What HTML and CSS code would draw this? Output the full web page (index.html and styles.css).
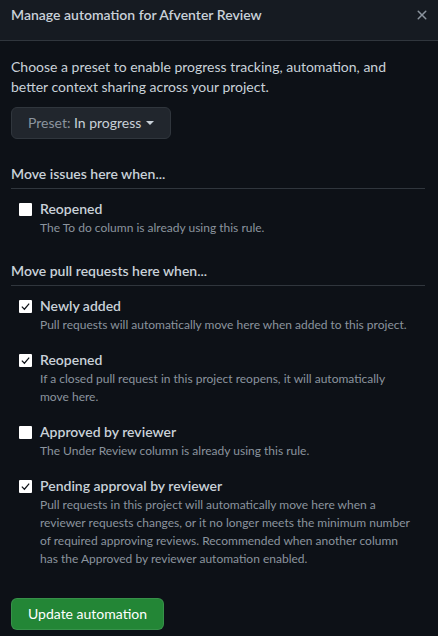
FILE: index.html
```html
<!DOCTYPE html>
<html lang="en">
<head>
<meta charset="utf-8">
<title>Manage automation</title>
<link rel="stylesheet" href="styles.css">
</head>
<body>
<div class="dialog">
  <div class="header">
    <h1 class="title">Manage automation for Afventer Review</h1>
    <button class="close" aria-label="Close">
      <svg width="16" height="16" viewBox="0 0 16 16"><path fill="currentColor" d="M3.72 3.72a.75.75 0 0 1 1.06 0L8 6.94l3.22-3.22a.75.75 0 1 1 1.06 1.06L9.06 8l3.22 3.22a.75.75 0 1 1-1.06 1.06L8 9.06l-3.22 3.22a.75.75 0 0 1-1.06-1.06L6.94 8 3.72 4.78a.75.75 0 0 1 0-1.06Z"/></svg>
    </button>
  </div>
  <div class="body">
    <p class="intro">Choose a preset to enable progress tracking, automation, and better context sharing across your project.</p>
    <button class="preset"><span><span class="muted">Preset:</span> In progress</span><span class="caret"></span></button>

    <h2 class="section">Move issues here when...</h2>
    <div class="rule">
      <span class="box"></span>
      <div class="rule-text">
        <div class="label">Reopened</div>
        <div class="note">The To do column is already using this rule.</div>
      </div>
    </div>

    <h2 class="section">Move pull requests here when...</h2>
    <div class="rule">
      <span class="box checked"><svg width="11" height="11" viewBox="0 0 12 12"><path d="M2 6.2 4.8 9 10 2.8" fill="none" stroke="#0d1117" stroke-width="1.3"/></svg></span>
      <div class="rule-text">
        <div class="label">Newly added</div>
        <div class="note">Pull requests will automatically move here when added to this project.</div>
      </div>
    </div>
    <div class="rule">
      <span class="box checked"><svg width="11" height="11" viewBox="0 0 12 12"><path d="M2 6.2 4.8 9 10 2.8" fill="none" stroke="#0d1117" stroke-width="1.3"/></svg></span>
      <div class="rule-text">
        <div class="label">Reopened</div>
        <div class="note">If a closed pull request in this project reopens, it will automatically move here.</div>
      </div>
    </div>
    <div class="rule">
      <span class="box"></span>
      <div class="rule-text">
        <div class="label">Approved by reviewer</div>
        <div class="note">The Under Review column is already using this rule.</div>
      </div>
    </div>
    <div class="rule">
      <span class="box checked"><svg width="11" height="11" viewBox="0 0 12 12"><path d="M2 6.2 4.8 9 10 2.8" fill="none" stroke="#0d1117" stroke-width="1.3"/></svg></span>
      <div class="rule-text">
        <div class="label">Pending approval by reviewer</div>
        <div class="note">Pull requests in this project will automatically move here when a reviewer requests changes, or it no longer meets the minimum number of required approving reviews. Recommended when another column has the Approved by reviewer automation enabled.</div>
      </div>
    </div>

    <button class="submit">Update automation</button>
  </div>
</div>
</body>
</html>
```
FILE: styles.css
```css
* { box-sizing: border-box; }
html, body { margin: 0; padding: 0; }
body {
  background: #0d1117;
  color: #c9d1d9;
  font-family: Lato, "Noto Sans", sans-serif;
  font-size: 14px;
  line-height: 20px;
  width: 438px;
  height: 636px;
  overflow: hidden;
}
.dialog { display: flex; flex-direction: column; }
.header {
  background: #161b22;
  border-bottom: 1px solid #30363d;
  height: 41px;
  padding: 5px 11px 0 11px;
  display: flex;
  justify-content: space-between;
  align-items: flex-start;
}
.title {
  margin: 0;
  font-size: 14px;
  font-weight: 600;
  line-height: 20px;
  color: #c9d1d9;
}
.close {
  background: none;
  border: 0;
  padding: 0;
  margin: 2px -3px 0 0;
  color: #8b949e;
  width: 16px;
  height: 16px;
  display: flex;
}
.body { padding: 16px 13px 0 11px; display: flex; flex-direction: column; align-items: flex-start; }
.intro { margin: 0 0 10px 0; }
.preset {
  font: inherit;
  color: #c9d1d9;
  background: #21262d;
  border: 1px solid #30363d;
  border-radius: 6px;
  height: 32px;
  width: 160px;
  padding: 0 0 0 16px;
  display: flex;
  align-items: center;
  gap: 5px;
}
.muted { color: #8b949e; }
.caret {
  width: 0; height: 0;
  border-left: 4px solid transparent;
  border-right: 4px solid transparent;
  border-top: 4px solid #c9d1d9;
}
.section {
  align-self: stretch;
  margin: 25px 0 10px 0;
  padding-bottom: 4px;
  font-size: 14px;
  font-weight: 600;
  line-height: 20px;
  border-bottom: 1px solid #30363d;
}
.rule + .section { margin-top: 8px; }
.rule { display: flex; gap: 8px; padding-left: 8px; padding-right: 10px; margin-bottom: 16px; }
.box {
  flex: none;
  width: 13px; height: 13px;
  margin-top: 4px;
  background: #fff;
  border-radius: 1px;
  display: flex; align-items: center; justify-content: center;
}
.label { font-weight: 600; line-height: 20px; }
.note { font-size: 12px; line-height: 18px; color: #8b949e; }
.submit {
  margin-top: 14px;
  font: inherit;
  color: #fff;
  background: #238636;
  border: 1px solid rgba(240,246,252,0.1);
  border-radius: 6px;
  height: 32px;
  padding: 0 16px;
}
```
